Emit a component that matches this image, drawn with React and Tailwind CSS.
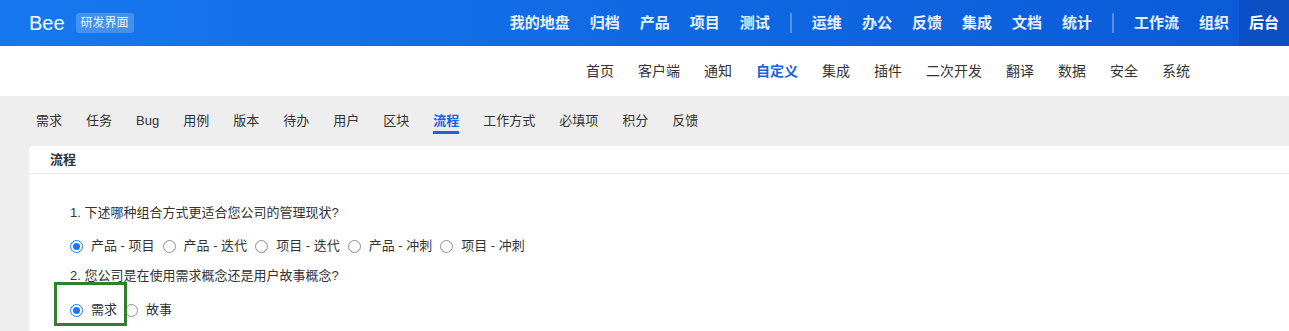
import React from "react";

const mainNav = [
  ["我的地盘", "归档", "产品", "项目", "测试"],
  ["运维", "办公", "反馈", "集成", "文档", "统计"],
  ["工作流", "组织"],
];

const subNav = ["首页", "客户端", "通知", "自定义", "集成", "插件", "二次开发", "翻译", "数据", "安全", "系统"];
const tabs = ["需求", "任务", "Bug", "用例", "版本", "待办", "用户", "区块", "流程", "工作方式", "必填项", "积分", "反馈"];

function Radio({ checked, label }) {
  return (
    <label className="flex items-center h-5 mr-[8px]">
      {checked ? (
        <span className="w-[13px] h-[13px] rounded-full border border-[#1677ff] flex items-center justify-center">
          <span className="w-[7px] h-[7px] rounded-full bg-[#1677ff]" />
        </span>
      ) : (
        <span className="w-[13px] h-[13px] rounded-full border border-[#8f8f8f] bg-white" />
      )}
      <span className="ml-[8px]">{label}</span>
    </label>
  );
}

export default function App() {
  return (
    <div className="w-[1289px] h-[331px] overflow-hidden bg-[#eeeeee] font-['Liberation_Sans','Noto_Sans_CJK_SC',sans-serif]">
      {/* top bar */}
      <div className="h-[46px] flex items-center bg-gradient-to-r from-[#1678ef] to-[#0b5ad8] text-white">
        <div className="pl-[29px] text-[20px] leading-none">Bee</div>
        <div className="ml-[11px] px-[5px] h-[20px] flex items-center rounded-[3px] bg-white/20 text-[12px] text-white/95">研发界面</div>
        <div className="flex-1" />
        <div className="flex items-center h-full text-[15px] font-bold text-white/90">
          {mainNav.map((group, gi) => (
            <React.Fragment key={gi}>
              {gi > 0 && <span className="mx-[10px] w-[2px] h-[20px] bg-white/30" />}
              {group.map((item) => (
                <span key={item} className="px-[10px]">{item}</span>
              ))}
            </React.Fragment>
          ))}
          <span className="h-full flex items-center px-[10px] bg-[#0a4fc4] text-white">后台</span>
        </div>
      </div>

      {/* sub nav */}
      <div className="h-[50px] bg-white flex items-center justify-end pr-[99px] gap-[24px] text-[14px] text-[#333]">
        {subNav.map((item) => (
          <span key={item} className={item === "自定义" ? "text-[#1a63e0] font-bold" : ""}>{item}</span>
        ))}
      </div>

      {/* tabs */}
      <div className="h-[50px] flex items-center pl-[36px] gap-[24px] text-[13px] text-[#333]">
        {tabs.map((t) => (
          <span key={t} className={t === "流程" ? "relative text-[#1a63e0] font-bold" : ""}>
            {t}
            {t === "流程" && <span className="absolute left-0 right-0 top-[20px] h-[3px] bg-[#1a63e0]" />}
          </span>
        ))}
      </div>

      {/* card */}
      <div className="ml-[29px] bg-white rounded-tl-[4px] h-[200px]">
        <div className="h-[28px] flex items-center pl-[21px] text-[13px] font-bold text-[#333] border-b border-[#ebebeb]">流程</div>
        <div className="pl-[41px] pt-[29px] text-[13px] text-[#333]">
          <div className="h-5 leading-5">1. 下述哪种组合方式更适合您公司的管理现状?</div>
          <div className="mt-[13px] flex">
            <Radio checked label="产品 - 项目" />
            <Radio label="产品 - 迭代" />
            <Radio label="项目 - 迭代" />
            <Radio label="产品 - 冲刺" />
            <Radio label="项目 - 冲刺" />
          </div>
          <div className="mt-[10px] h-5 leading-5">2. 您公司是在使用需求概念还是用户故事概念?</div>
          <div className="mt-[14px] flex relative">
            <Radio checked label="需求" />
            <Radio label="故事" />
            <span className="absolute left-[-16px] top-[-18px] w-[73px] h-[44px] border-[3px] border-[#2f7f2f]" />
          </div>
        </div>
      </div>
    </div>
  );
}
